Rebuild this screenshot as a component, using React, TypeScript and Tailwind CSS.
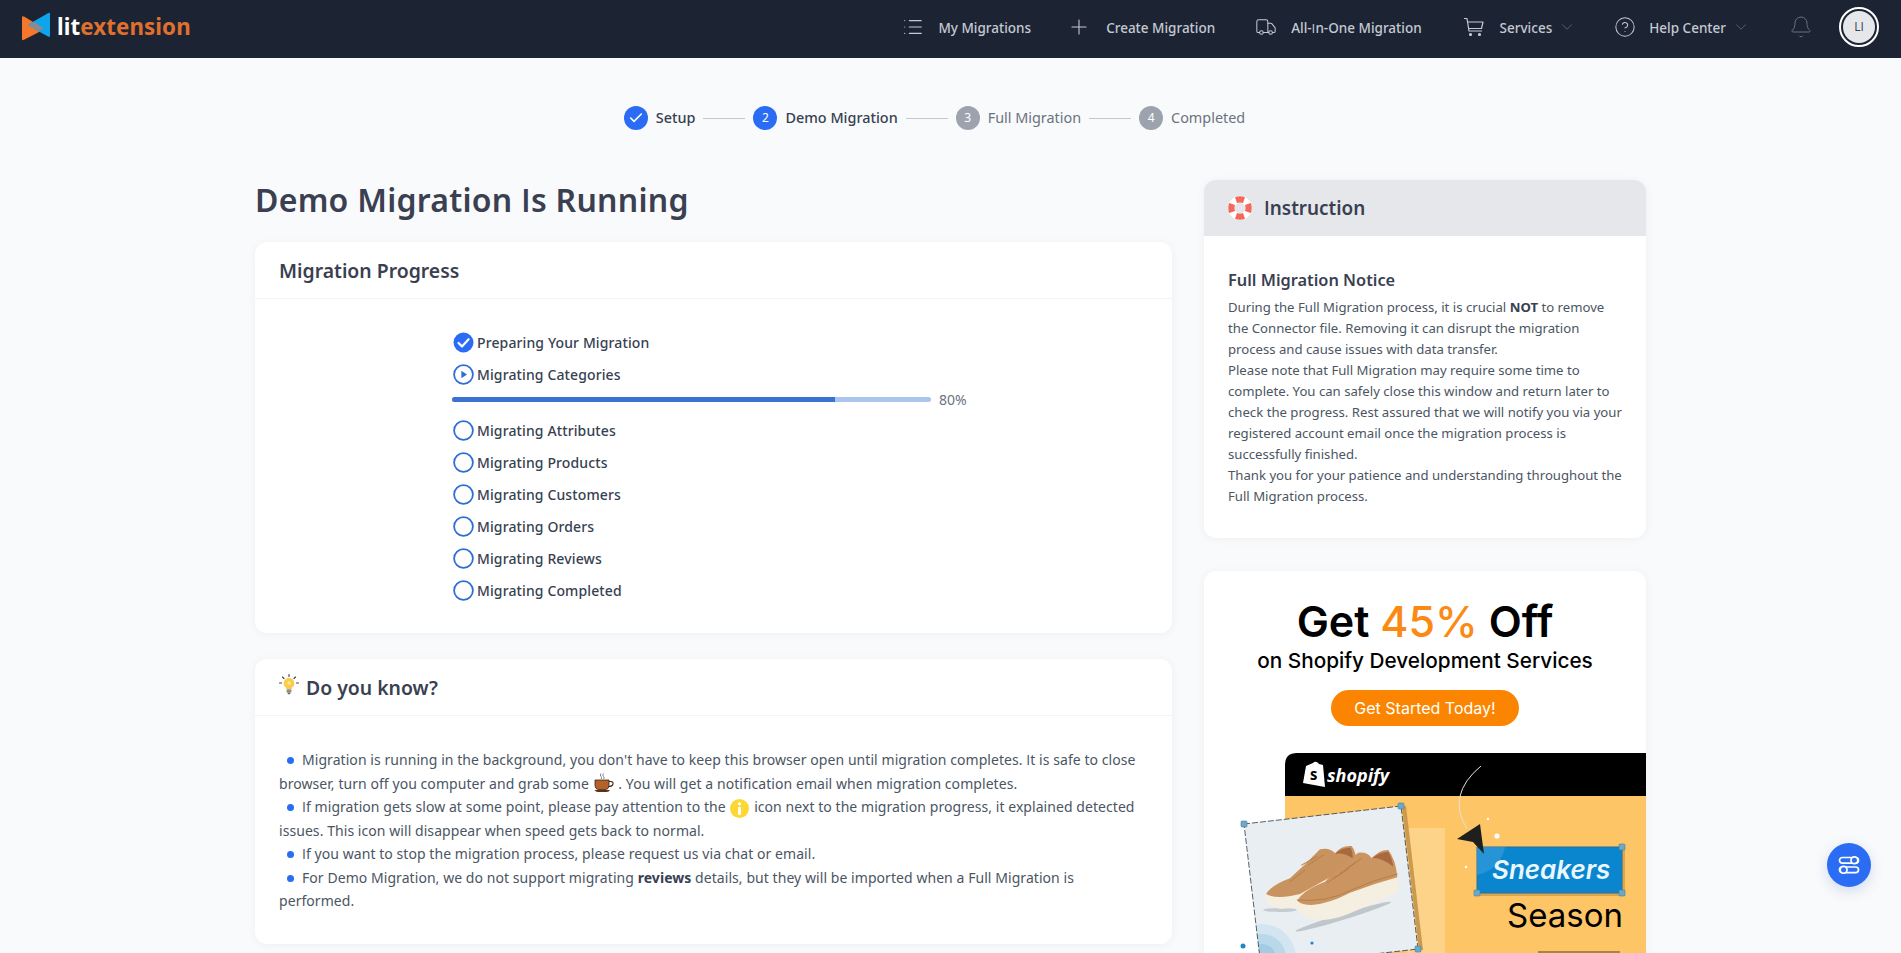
import React from "react";
import { List, Plus, Truck, CircleHelp, ChevronDown, Bell, Check } from "lucide-react";

const font = { fontFamily: '"Noto Sans", sans-serif' };
const I = () => <span className="font-['Open_Sans']">I</span>;

function Logo() {
  return (
    <div className="flex items-center w-[190px]">
      <svg width="30" height="30" viewBox="0 0 30 30" className="ml-[21px] shrink-0">
        <path d="M1 5.5 Q1 3.5 3 4.6 L22 16 Q23.5 17 22 18 L3 27.8 Q1 28.8 1 27 Z" fill="#f5782a" />
        <path d="M29 1.8 Q29 0 27 1.2 L8 12 Q6.5 13 8 14 L27 24.6 Q29 25.6 29 23.5 Z" fill="#0ea5ec" />
        <path d="M7.5 13 L13 9.8 L22.5 16.4 L17 19.6 Z" fill="#8b8b8f" />
      </svg>
      <span className="ml-[6px] text-[22.3px] font-bold leading-none tracking-[0.1px] text-white">
        lit<span className="text-[#e0702e]">extension</span>
      </span>
    </div>
  );
}

function Cart() {
  return (
    <svg width="20" height="20" viewBox="0 0 20 20" fill="none" stroke="#c5c9d2" strokeWidth="1.2" className="shrink-0">
      <path d="M0.5 1.5 H3 L5 14 H17.5" strokeLinecap="round" strokeLinejoin="round" />
      <path d="M3.6 5 H19 L17.5 11.5 H4.6" strokeLinejoin="round" />
      <circle cx="6.5" cy="17.5" r="1" fill="#c5c9d2" />
      <circle cx="15.5" cy="17.5" r="1" fill="#c5c9d2" />
    </svg>
  );
}

function Label({ children }: { children: React.ReactNode }) {
  return <span className="text-[13.5px] font-medium text-[#c5c9d2]">{children}</span>;
}

function Header() {
  const iconClass = "shrink-0 text-[#c5c9d2]";
  const chev = "ml-[6px] shrink-0 text-[#6b7280]";
  return (
    <header className="flex h-[58px] items-center bg-[#1c2434] pb-[4px]">
      <Logo />
      <nav className="ml-auto mr-[22px] flex items-center">
        <List size={22} strokeWidth={1.2} className={iconClass} />
        <span className="ml-[14px]"><Label>My Migrations</Label></span>
        <Plus size={24} strokeWidth={1.1} className={`ml-[36px] ${iconClass}`} />
        <span className="ml-[15px]"><Label>Create Migration</Label></span>
        <Truck size={22} strokeWidth={1.1} className={`ml-[40px] ${iconClass}`} />
        <span className="ml-[14px]"><Label>All-<I />n-One Migration</Label></span>
        <span className="ml-[42px]"><Cart /></span>
        <span className="ml-[16px]"><Label>Services</Label></span>
        <ChevronDown size={18} strokeWidth={1} className={chev} />
        <CircleHelp size={22} strokeWidth={1.1} className={`ml-[38px] ${iconClass}`} />
        <span className="ml-[13px]"><Label>Help Center</Label></span>
        <ChevronDown size={18} strokeWidth={1} className={chev} />
        <Bell size={24} strokeWidth={1} className="ml-[39px] shrink-0 text-[#6b7280]" />
        <div className="ml-[26px] flex h-[40px] w-[40px] items-center justify-center rounded-full border-2 border-white p-[2px]">
          <div className="flex h-full w-full items-center justify-center rounded-full bg-[#e5e7eb] font-['Open_Sans'] text-[12px] text-[#374151]">LI</div>
        </div>
      </nav>
    </header>
  );
}

function Step({ n, label, state }: { n: string; label: string; state: "done" | "active" | "todo" }) {
  const active = state !== "todo";
  return (
    <div className="flex items-center gap-[8px]">
      <span className={`flex h-[24px] w-[24px] items-center justify-center rounded-full text-[12px] text-white ${active ? "bg-[#2a6df4]" : "bg-[#9ca3af]"}`}>
        {state === "done" ? <Check size={16} strokeWidth={2.4} /> : n}
      </span>
      <span className={`pb-[1px] text-[14.4px] ${active ? "font-medium text-[#374151]" : "text-[#6b7280]"}`}>{label}</span>
    </div>
  );
}

function Stepper() {
  const Line = () => <span className="mx-[8px] h-px w-[42px] bg-[#c3c7ce]" />;
  return (
    <div className="mr-[32px] mt-[48px] flex h-[24px] items-center justify-center">
      <Step n="1" label="Setup" state="done" />
      <Line />
      <Step n="2" label="Demo Migration" state="active" />
      <Line />
      <Step n="3" label="Full Migration" state="todo" />
      <Line />
      <Step n="4" label="Completed" state="todo" />
    </div>
  );
}

function StatusIcon({ kind }: { kind: "done" | "run" | "todo" }) {
  return (
    <svg width="21" height="21" viewBox="0 0 21 21" className="shrink-0">
      {kind === "done" ? (
        <>
          <circle cx="10.5" cy="10.5" r="10" fill="#2a6df4" />
          <path d="M5.5 11 L9 14.4 L15.6 7.2" fill="none" stroke="#fff" strokeWidth="2.2" strokeLinecap="round" strokeLinejoin="round" />
        </>
      ) : (
        <>
          <circle cx="10.5" cy="10.5" r="9.4" fill="none" stroke="#2f6dd8" strokeWidth="1.8" />
          {kind === "run" && <path d="M8.4 6.8 L14 10.5 L8.4 14.2 Z" fill="#2f6dd8" />}
        </>
      )}
    </svg>
  );
}

function Row({ kind, label }: { kind: "done" | "run" | "todo"; label: string }) {
  return (
    <div className="ml-[1px] flex h-[32px] items-center gap-[3px]">
      <StatusIcon kind={kind} />
      <span className="text-[14px] font-medium tracking-[0.12px] text-[#374151]">{label}</span>
    </div>
  );
}

function CardHeader({ children }: { children: React.ReactNode }) {
  return (
    <div className="flex h-[57px] items-center gap-[7px] border-b border-[#f3f4f6] px-[24px] pt-[2px] text-[19.4px] font-semibold text-[#3a3f51]">
      {children}
    </div>
  );
}

function ProgressCard() {
  return (
    <section className="rounded-[12px] bg-white shadow-[0_1px_10px_rgba(17,24,39,0.05)]">
      <CardHeader>Migration Progress</CardHeader>
      <div className="pb-[27px] pl-[197px] pt-[27px]">
        <Row kind="done" label="Preparing Your Migration" />
        <Row kind="run" label="Migrating Categories" />
        <div className="flex h-[24px] items-center gap-[8px] pb-[6px]">
          <div className="h-[5px] w-[479px] overflow-hidden rounded-full bg-[#abc6ee]">
            <div className="h-full bg-[#3a71d3]" style={{ width: "80%" }} />
          </div>
          <span className="text-[14px] text-[#6b7280]">80%</span>
        </div>
        {["Migrating Attributes", "Migrating Products", "Migrating Customers", "Migrating Orders", "Migrating Reviews", "Migrating Completed"].map((l) => (
          <Row key={l} kind="todo" label={l} />
        ))}
      </div>
    </section>
  );
}

function Bulb() {
  return (
    <svg width="20" height="21" viewBox="0 0 20 21" className="-mt-[7px] shrink-0">
      <g stroke="#3f3f3f" strokeWidth="1.1" strokeLinecap="round">
        <path d="M10 0.5 V2.5 M3.5 3 L5 4.5 M16.5 3 L15 4.5 M0.5 9 H2.5 M17.5 9 H19.5" />
      </g>
      <path d="M10 4 a5.2 5.2 0 0 1 3 9.5 V15 H7 V13.5 A5.2 5.2 0 0 1 10 4 Z" fill="#fbcb4a" />
      <circle cx="10" cy="9" r="1.8" fill="#fde9a0" />
      <rect x="7.6" y="15.3" width="4.8" height="3.4" rx="1" fill="#8f8f8f" />
      <rect x="8.6" y="18.8" width="2.8" height="1.4" rx="0.6" fill="#6b6b6b" />
    </svg>
  );
}

function Coffee() {
  return (
    <svg width="20" height="20" viewBox="0 0 20 20" className="mx-[1px] inline-block align-[-4px]">
      <path d="M7 0.5 Q5.5 2 7 3.5 Q8.5 5 7 6 M9.5 0.5 Q8 2 9.5 3.5 Q11 5 9.5 6" fill="none" stroke="#777" strokeWidth="0.9" />
      <path d="M1 7 H15 V12 Q15 16.5 11 16.5 H5 Q1 16.5 1 12 Z" fill="#b4622a" stroke="#3d2413" strokeWidth="0.8" />
      <path d="M15 8.5 H17 Q19.4 8.5 19 11 Q18.4 13.5 14.5 13.5" fill="none" stroke="#3d2413" strokeWidth="1.1" />
      <path d="M0.5 17 H16 Q15 19 12.5 19 H4 Q1.5 19 0.5 17 Z" fill="#5b3216" />
    </svg>
  );
}

function InfoDot() {
  return (
    <span className="mx-[1px] inline-flex h-[19px] w-[19px] items-center justify-center rounded-full bg-[#fdd835] align-[-3px]">
      <svg width="5" height="13" viewBox="0 0 5 13">
        <circle cx="2.5" cy="1.8" r="1.6" fill="#fff" />
        <rect x="1" y="5" width="3" height="8" rx="1" fill="#fff" />
      </svg>
    </span>
  );
}

const Dot = () => <span className="ml-[8px] mr-[8px] inline-block h-[7px] w-[7px] rounded-full bg-[#2a6df4] align-[1px]" />;

function KnowCard() {
  return (
    <section className="mt-[26px] rounded-[12px] bg-white shadow-[0_1px_10px_rgba(17,24,39,0.05)]">
      <CardHeader>
        <Bulb />
        <span>Do you know?</span>
      </CardHeader>
      <div className="px-[24px] pb-[31px] pt-[32px] text-[14px] leading-[23.5px] tracking-[0.06px] text-[#4b5563]">
        <div>
          <Dot />
          Migration is running in the background, you don't have to keep this browser open until migration completes. <I />t is safe to close browser, turn off you computer and grab some <Coffee /> . You will get a notification email when migration completes.
        </div>
        <div>
          <Dot />
          <I />f migration gets slow at some point, please pay attention to the <InfoDot /> icon next to the migration progress, it explained detected issues. This icon will disappear when speed gets back to normal.
        </div>
        <div>
          <Dot />
          <I />f you want to stop the migration process, please request us via chat or email.
        </div>
        <div>
          <Dot />
          For Demo Migration, we do not support migrating <b className="font-bold text-[#374151]">reviews</b> details, but they will be imported when a Full Migration is performed.
        </div>
      </div>
    </section>
  );
}

function Lifebuoy() {
  return (
    <svg width="24" height="24" viewBox="0 0 24 24">
      <circle cx="12" cy="12" r="8.6" fill="none" stroke="#fff" strokeWidth="6.6" />
      <g fill="#f26a5c">
        <path d="M7 1.2 Q12 -0.6 17 1.2 L15 7 Q12 6 9 7 Z" />
        <path d="M7 22.8 Q12 24.6 17 22.8 L15 17 Q12 18 9 17 Z" />
        <path d="M1.2 7 Q-0.6 12 1.2 17 L7 15 Q6 12 7 9 Z" />
        <path d="M22.8 7 Q24.6 12 22.8 17 L17 15 Q18 12 17 9 Z" />
      </g>
    </svg>
  );
}

function InstructionCard() {
  return (
    <section className="overflow-hidden rounded-[12px] bg-white shadow-[0_1px_10px_rgba(17,24,39,0.05)]">
      <div className="flex h-[56px] items-center gap-[12px] bg-[#e5e7eb] px-[24px]">
        <Lifebuoy />
        <span className="pt-[1px] text-[18.9px] font-semibold text-[#3a3f51]"><I />nstruction</span>
      </div>
      <div className="px-[24px] pb-[31px] pt-[32px]">
        <h3 className="text-[16.35px] font-semibold leading-[24px] text-[#3a3f51]">Full Migration Notice</h3>
        <p className="mt-[5px] text-[13.17px] leading-[21px] text-[#4b5563]">
          During the Full Migration process, it is crucial <b className="font-bold text-[#374151]">NOT</b> to remove the Connector file. Removing it can disrupt the migration process and cause issues with data transfer.
          <br />
          Please note that Full Migration may require some time to complete. You can safely close this window and return later to check the progress. Rest assured that we will notify you via your registered account email once the migration process is successfully finished.
          <br />
          Thank you for your patience and understanding throughout the Full Migration process.
        </p>
      </div>
    </section>
  );
}

function Handle({ x, y }: { x: number; y: number }) {
  return <rect x={x - 3} y={y - 3} width="6" height="6" rx="1" fill="#6fa8c7" stroke="#3f7f9f" strokeWidth="0.6" />;
}

function Promo() {
  const inter = "Inter, sans-serif";
  return (
    <svg viewBox="1204 740 442 213" width="442" height="213" className="block">
      <defs>
        <clipPath id="photo">
          <polygon points="1244,824 1401,806 1418,949 1261,967" />
        </clipPath>
        <clipPath id="panel">
          <path d="M1285 953 V765 Q1285 753 1297 753 H1646 V953 Z" />
        </clipPath>
      </defs>
      <g clipPath="url(#panel)">
        <rect x="1285" y="753" width="361" height="43" fill="#000" />
        <rect x="1285" y="796" width="361" height="157" fill="#fdc566" />
        <rect x="1407" y="828" width="38" height="125" fill="#fdd38a" />
        <path d="M1481 766 Q1446 795 1467 829" fill="none" stroke="#e9e3d3" strokeWidth="1" />
        <circle cx="1497" cy="836" r="2.6" fill="#fff" />
        <circle cx="1488" cy="819" r="1.2" fill="#fff" />
        <circle cx="1466" cy="867" r="1.2" fill="#fff" />
        <rect x="1538" y="951" width="82" height="2" fill="#a8843f" />
      </g>
      <path d="M1306 766 L1313 763 Q1316 760 1319 764 L1323 765 L1325 787 L1303 783 Z" fill="#fff" />
      <text x="1310" y="780" fontFamily='"Noto Sans", sans-serif' fontSize="13" fontWeight="800" fill="#000">S</text>
      <text x="1327" y="782" fontFamily='"Noto Sans", sans-serif' fontStyle="italic" fontWeight="700" fontSize="18" fill="#fff">shopify</text>

      <polygon points="1402,806 1406,806 1423,950 1419,950" fill="#c99a4f" />
      <polygon points="1244,824 1401,806 1418,949 1261,967" fill="#e9eef3" />
      <g clipPath="url(#photo)">
        <circle cx="1262" cy="958" r="34" fill="#d2e5f0" />
        <circle cx="1262" cy="958" r="24" fill="#b9d9ea" />
        <circle cx="1262" cy="958" r="14" fill="#a2cce4" />
      </g>
      <polygon points="1244,824 1401,806 1418,949 1261,967" fill="none" stroke="#2e3a42" strokeWidth="0.8" strokeDasharray="6 2" />
      <g transform="translate(1240 750) scale(0.3333)">
        <ellipse cx="310" cy="500" rx="150" ry="9" fill="#8f969c" opacity="0.45" transform="rotate(-17 310 500)" />
        <ellipse cx="120" cy="480" rx="50" ry="6" fill="#8f969c" opacity="0.4" />
        <path d="M75 435 Q78 470 120 477 L170 472 L340 365 L340 320 Z" fill="#f5efe2" />
        <path d="M78 432 Q95 405 150 385 Q195 345 240 298 Q270 292 285 310 Q305 285 335 288 Q352 310 345 340 L180 432 Q110 450 78 432 Z" fill="#c9935f" />
        <path d="M165 452 Q165 490 210 505 Q260 520 330 490 L470 430 Q482 410 472 380 Z" fill="#f5efe2" />
        <path d="M172 452 Q190 420 255 395 Q300 345 355 308 Q385 306 395 325 Q420 298 445 300 Q468 330 472 382 Q400 402 330 428 Q270 460 215 465 Q185 465 172 452 Z" fill="#cb9561" />
        <path d="M395 325 Q420 305 445 305 Q458 330 460 350 Q420 320 395 325 Z" fill="#a9693f" />
        <path d="M285 312 Q305 292 332 293 Q340 310 338 325 Q310 305 285 312 Z" fill="#a9693f" />
        <g stroke="#b57c49" strokeWidth="3" fill="none" strokeLinecap="round">
          <path d="M262 398 L305 370 M280 385 L325 358 M300 370 L345 340 M320 355 L365 325" />
          <path d="M185 345 L230 320 M205 345 L250 315 M150 395 L195 360" />
          <path d="M172 450 Q260 458 330 422 Q400 390 472 372" />
        </g>
      </g>
      <Handle x={1244} y={824} />
      <Handle x={1401} y={806} />
      <Handle x={1418} y={949} />
      <circle cx="1243" cy="946" r="2.5" fill="#1d87c9" />
      <circle cx="1312" cy="943" r="1.6" fill="#1d87c9" />

      <rect x="1480" y="850" width="145" height="46" fill="#d9a64f" />
      <rect x="1477" y="847" width="145" height="46" fill="#0a86cf" stroke="#2c6f95" strokeWidth="1" />
      <path d="M1477 847 H1505 Q1500 870 1477 875 Z" fill="#3b9fdc" opacity="0.6" />
      <text x="1492" y="879" fontFamily={inter} fontStyle="italic" fontWeight="600" fontSize="26" fill="#eaf7ff">Sneakers</text>
      <Handle x={1622} y={847} />
      <Handle x={1477} y={893} />
      <Handle x={1622} y={893} />
      <path d="M1457 839 L1480 824 L1484 854 L1473 842 Z" fill="#1f1f1f" />
      <text x="1507" y="927" fontFamily={inter} fontWeight="400" fontSize="33" fill="#000">Season</text>
    </svg>
  );
}

function PromoCard() {
  return (
    <section className="mt-[33px] overflow-hidden rounded-[12px] bg-white pb-[40px] pt-[24px] shadow-[0_1px_10px_rgba(17,24,39,0.05)]" style={{ fontFamily: "Inter, sans-serif" }}>
      <div className="text-center text-[43px] font-semibold leading-[52px] text-black">
        Get <span className="font-medium text-[#fb8a14]">45%</span> Off
      </div>
      <div className="text-center text-[20.75px] font-medium leading-[28px] text-black">on Shopify Development Services</div>
      <div className="mt-[15px] flex justify-center">
        <span className="flex h-[36px] w-[188px] items-center justify-center rounded-full bg-[#fb8500] text-[16px] text-white">Get Started Today!</span>
      </div>
      <div className="mt-[14px]">
        <Promo />
      </div>
    </section>
  );
}

function Fab() {
  return (
    <button className="fixed left-[1827px] top-[843px] flex h-[44px] w-[44px] items-center justify-center rounded-full bg-[#2a6df4] shadow-[0_4px_14px_rgba(30,64,175,0.18)]">
      <svg width="22" height="20" viewBox="0 0 22 20" fill="none" stroke="#fff" strokeWidth="1.7">
        <rect x="1.5" y="2.5" width="19" height="5.6" rx="2.8" />
        <circle cx="16.4" cy="5.3" r="3.4" fill="#2a6df4" />
        <rect x="1.5" y="12" width="19" height="5.6" rx="2.8" />
        <circle cx="5.6" cy="14.8" r="3.4" fill="#2a6df4" />
      </svg>
    </button>
  );
}

export default function App() {
  return (
    <div className="h-[953px] overflow-hidden bg-[#f9fafb]" style={font}>
      <Header />
      <main className="mx-auto w-[1391px]">
        <Stepper />
        <div className="mt-[50px] flex gap-[32px]">
          <div className="w-[917px] shrink-0">
            <h1 className="mb-[22px] text-[32px] font-semibold leading-[40px] tracking-[0.25px] text-[#3a3f51]">Demo Migration <I />s Running</h1>
            <ProgressCard />
            <KnowCard />
          </div>
          <div className="w-[442px] shrink-0">
            <InstructionCard />
            <PromoCard />
          </div>
        </div>
      </main>
      <Fab />
    </div>
  );
}
